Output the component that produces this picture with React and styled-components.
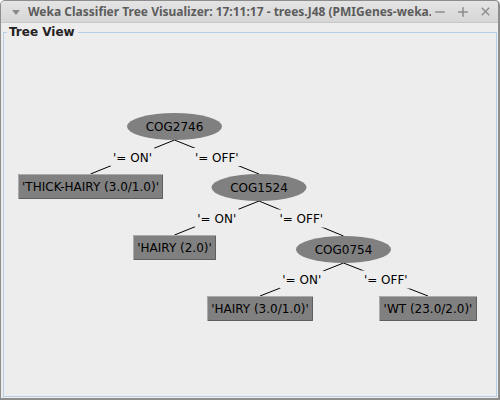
import React from 'react';
import styled, { createGlobalStyle } from 'styled-components';
import { Minus, Plus, X } from 'lucide-react';

const GlobalStyle = createGlobalStyle`
  html, body {
    margin: 0;
    padding: 0;
    background: #ffffff;
  }
`;

const nodes = [
  { id: 'n0', kind: 'split', cx: 174.5, top: 113, label: 'COG2746' },
  { id: 'n1', kind: 'leaf', cx: 90.5, top: 174, w: 145, label: "'THICK-HAIRY (3.0/1.0)'" },
  { id: 'n2', kind: 'split', cx: 259, top: 174, label: 'COG1524' },
  { id: 'n3', kind: 'leaf', cx: 174.5, top: 235, w: 83, label: "'HAIRY (2.0)'" },
  { id: 'n4', kind: 'split', cx: 343.5, top: 236, label: 'COG0754' },
  { id: 'n5', kind: 'leaf', cx: 260, top: 296, w: 106, label: "'HAIRY (3.0/1.0)'" },
  { id: 'n6', kind: 'leaf', cx: 428, top: 296, w: 98, label: "'WT (23.0/2.0)'" },
];

const edges = [
  { from: 'n0', to: 'n1', label: "'= ON'" },
  { from: 'n0', to: 'n2', label: "'= OFF'" },
  { from: 'n2', to: 'n3', label: "'= ON'" },
  { from: 'n2', to: 'n4', label: "'= OFF'" },
  { from: 'n4', to: 'n5', label: "'= ON'" },
  { from: 'n4', to: 'n6', label: "'= OFF'" },
];

const RX = 47.5;
const RY = 13.5;
const LEAF_H = 25;

const byId = Object.fromEntries(nodes.map((n) => [n.id, n]));

const Window = styled.div`
  width: 500px;
  height: 400px;
  box-sizing: border-box;
  display: flex;
  flex-direction: column;
  overflow: hidden;
  background: #ededed;
  border-style: solid;
  border-color: #8e8e8e;
  border-width: 1px 2px 2px 1px;
  border-radius: 5px 5px 0 0;
`;

const TitleBar = styled.div`
  height: 22px;
  flex: none;
  display: flex;
  align-items: center;
  padding: 0 6px 0 10px;
  background: linear-gradient(#e4e4e4, #d6d6d6);
  border-bottom: 1px solid #c8c8c8;
  box-sizing: border-box;
`;

const MenuArrow = styled.span`
  width: 0;
  height: 0;
  border-left: 4px solid transparent;
  border-right: 4px solid transparent;
  border-top: 5px solid #8a8a8a;
  margin: 1px 8px 0 1px;
  flex: none;
`;

const Title = styled.div`
  width: 403px;
  overflow: hidden;
  white-space: nowrap;
  font-family: 'Noto Sans', 'Open Sans', sans-serif;
  font-weight: bold;
  font-size: 12px;
  color: #5c5c5c;
  flex: none;
`;

const Controls = styled.div`
  display: flex;
  align-items: center;
  gap: 9px;
  margin-left: auto;
  color: #8c8c8c;
`;

const Content = styled.div`
  flex: 1;
  display: flex;
  flex-direction: column;
  padding: 1px 1px 1px 2px;
`;

const Group = styled.fieldset`
  flex: 1;
  margin: 0;
  padding: 0;
  min-width: 0;
  border: 1px solid #b7cfe5;
  overflow: hidden;
`;

const Legend = styled.legend`
  margin-left: 3px;
  padding: 0 3px 0 2px;
  line-height: 16px;
  font-family: 'DejaVu Sans', 'Noto Sans', sans-serif;
  font-weight: bold;
  font-size: 12px;
  color: #222222;
`;

const Canvas = styled.svg`
  display: block;
  width: 492px;
  height: 356px;
  font-family: 'DejaVu Sans', 'Liberation Sans', sans-serif;
  font-size: 12px;
`;

const bottomOf = (n) => (n.kind === 'split' ? n.top + RY * 2 : n.top + LEAF_H);

const labelWidth = (t) => (t.includes('OFF') ? 48 : 44);

const Leaf = ({ n }) => {
  const x = n.cx - n.w / 2;
  const y = n.top;
  return (
    <g>
      <rect x={x} y={y} width={n.w} height={LEAF_H} fill="#808080" />
      <path d={`M${x + 0.5} ${y + LEAF_H} V${y + 0.5} H${x + n.w}`} stroke="#ababab" fill="none" />
      <path d={`M${x + 1} ${y + LEAF_H - 0.5} H${x + n.w - 0.5} V${y + 1}`} stroke="#5f5f5f" fill="none" />
      <text x={n.cx} y={y + 16.5} textAnchor="middle" fill="#000">{n.label}</text>
    </g>
  );
};

const Split = ({ n }) => (
  <g>
    <ellipse cx={n.cx} cy={n.top + RY} rx={RX} ry={RY} fill="#808080" />
    <text x={n.cx} y={n.top + RY + 4.5} textAnchor="middle" fill="#000">{n.label}</text>
  </g>
);

const App = () => {
  return (
    <>
      <GlobalStyle />
      <Window>
        <TitleBar>
          <MenuArrow />
          <Title>Weka Classifier Tree Visualizer: 17:11:17 - trees.J48 (PMIGenes-weka.filters.unsupervised</Title>
          <Controls>
            <Minus size={14} strokeWidth={2.6} strokeLinecap="square" />
            <Plus size={14} strokeWidth={2.6} strokeLinecap="square" />
            <X size={13} strokeWidth={2.6} strokeLinecap="square" />
          </Controls>
        </TitleBar>
        <Content>
          <Group>
            <Legend>Tree View</Legend>
            <Canvas viewBox="4 40 492 356">
              {edges.map((e) => {
                const a = byId[e.from];
                const b = byId[e.to];
                return (
                  <line
                    key={e.from + e.to}
                    x1={a.cx}
                    y1={bottomOf(a)}
                    x2={b.cx}
                    y2={b.top}
                    stroke="#000"
                    strokeWidth="1"
                  />
                );
              })}
              {edges.map((e) => {
                const a = byId[e.from];
                const b = byId[e.to];
                const mx = (a.cx + b.cx) / 2;
                const my = (bottomOf(a) + b.top) / 2;
                const w = labelWidth(e.label);
                return (
                  <g key={'l' + e.from + e.to}>
                    <rect x={mx - w / 2} y={my - 9} width={w} height={18} fill="#ededed" />
                    <text x={mx} y={my + 4.5} textAnchor="middle" fill="#000">{e.label}</text>
                  </g>
                );
              })}
              {nodes.map((n) =>
                n.kind === 'split' ? <Split key={n.id} n={n} /> : <Leaf key={n.id} n={n} />
              )}
            </Canvas>
          </Group>
        </Content>
      </Window>
    </>
  );
};

export default App;
